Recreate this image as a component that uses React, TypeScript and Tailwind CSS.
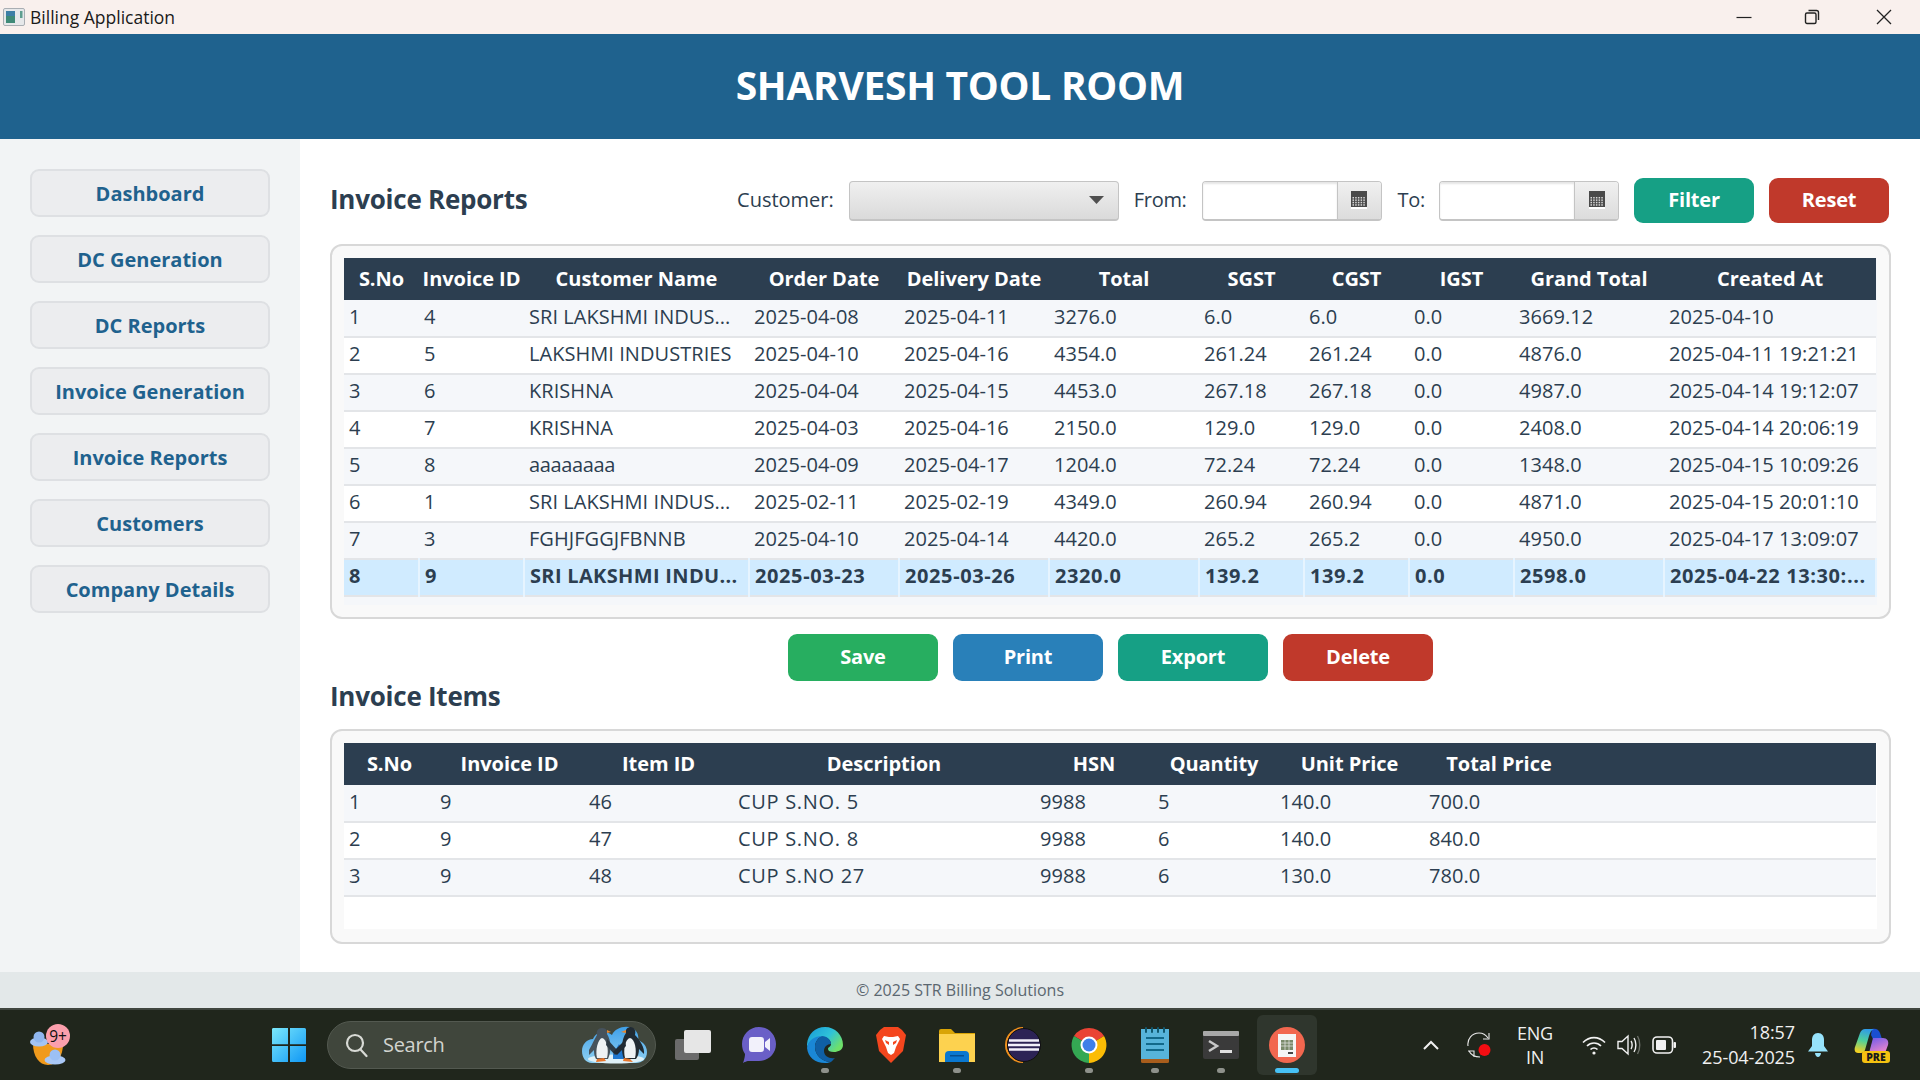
import React from "react";

const reportCols = ["w-[75px]", "w-[105px]", "w-[225px]", "w-[150px]", "w-[150px]", "w-[150px]", "w-[105px]", "w-[105px]", "w-[105px]", "w-[150px]", "w-[212px]"];
const reportHead = ["S.No", "Invoice ID", "Customer Name", "Order Date", "Delivery Date", "Total", "SGST", "CGST", "IGST", "Grand Total", "Created At"];
const reportRows = [
  ["1", "4", "SRI LAKSHMI INDUS...", "2025-04-08", "2025-04-11", "3276.0", "6.0", "6.0", "0.0", "3669.12", "2025-04-10"],
  ["2", "5", "LAKSHMI INDUSTRIES", "2025-04-10", "2025-04-16", "4354.0", "261.24", "261.24", "0.0", "4876.0", "2025-04-11 19:21:21"],
  ["3", "6", "KRISHNA", "2025-04-04", "2025-04-15", "4453.0", "267.18", "267.18", "0.0", "4987.0", "2025-04-14 19:12:07"],
  ["4", "7", "KRISHNA", "2025-04-03", "2025-04-16", "2150.0", "129.0", "129.0", "0.0", "2408.0", "2025-04-14 20:06:19"],
  ["5", "8", "aaaaaaaa", "2025-04-09", "2025-04-17", "1204.0", "72.24", "72.24", "0.0", "1348.0", "2025-04-15 10:09:26"],
  ["6", "1", "SRI LAKSHMI INDUS...", "2025-02-11", "2025-02-19", "4349.0", "260.94", "260.94", "0.0", "4871.0", "2025-04-15 20:01:10"],
  ["7", "3", "FGHJFGGJFBNNB", "2025-04-10", "2025-04-14", "4420.0", "265.2", "265.2", "0.0", "4950.0", "2025-04-17 13:09:07"],
  ["8", "9", "SRI LAKSHMI INDU...", "2025-03-23", "2025-03-26", "2320.0", "139.2", "139.2", "0.0", "2598.0", "2025-04-22 13:30:..."],
];
const itemCols = ["w-[91px]", "w-[149px]", "w-[149px]", "w-[302px]", "w-[118px]", "w-[122px]", "w-[149px]", "w-[150px]", "w-[302px]"];
const itemHead = ["S.No", "Invoice ID", "Item ID", "Description", "HSN", "Quantity", "Unit Price", "Total Price", ""];
const itemRows = [
  ["1", "9", "46", "CUP S.NO. 5", "9988", "5", "140.0", "700.0", ""],
  ["2", "9", "47", "CUP S.NO. 8", "9988", "6", "140.0", "840.0", ""],
  ["3", "9", "48", "CUP S.NO 27", "9988", "6", "130.0", "780.0", ""],
];
const nav = ["Dashboard", "DC Generation", "DC Reports", "Invoice Generation", "Invoice Reports", "Customers", "Company Details"];

function trackingFor(cell: string, sel: boolean, col: number) {
  if (sel) return col === 2 ? "tracking-[0.33px] border-r-2 border-[#e6f4ff]" : "tracking-[0.6px] border-r-2 border-[#e6f4ff]";
  if (cell.startsWith("CUP")) return "tracking-[0.7px]";
  if (cell === "aaaaaaaa") return "tracking-[-0.35px]";
  return "tracking-[0.05px]";
}

function DataTable({ cols, head, rows, selected }: { cols: string[]; head: string[]; rows: string[][]; selected?: number }) {
  return (
    <table className="table-fixed w-[1532px] border-collapse">
      <colgroup>
        {cols.map((c, i) => (
          <col key={i} className={c} />
        ))}
      </colgroup>
      <thead>
        <tr className="h-[42px] bg-[#2c3e50] text-white">
          {head.map((h, i) => (
            <th key={i} className="p-0 text-center text-[20px] font-bold tracking-[-0.05px] whitespace-nowrap">{h}</th>
          ))}
        </tr>
      </thead>
      <tbody>
        {rows.map((r, i) => {
          const sel = i === selected;
          return (
            <tr key={i} className={`h-[37px] border-b-2 border-[#e3e5e8] ${sel ? "bg-[#d0ebff] font-bold" : i % 2 === 0 ? "bg-[#f5f7fa]" : "bg-white"}`}>
              {r.map((c, j) => (
                <td key={j} className={`p-0 pl-[5px] pb-[3px] text-[20px] leading-[24px] text-[#2c3e50] whitespace-nowrap overflow-hidden ${trackingFor(c, sel, j)}`}>{c}</td>
              ))}
            </tr>
          );
        })}
      </tbody>
    </table>
  );
}

function ActionButton({ label, color }: { label: string; color: string }) {
  return (
    <button className={`w-[150px] ${color} h-[47px] pb-[2px] rounded-[9px] text-white text-[20px] font-bold tracking-[-0.2px]`}>{label}</button>
  );
}

function DateField() {
  return (
    <div className="flex w-[180px] h-[40px] rounded-[4px] border border-[#c4c4c4] border-b-2 bg-white overflow-hidden">
      <div className="flex-1 shadow-[inset_0_2px_2px_#e5e5e5]" />
      <div className="w-[44px] border-l border-[#c4c4c4] bg-gradient-to-b from-[#f0f0f0] to-[#dcdcdc] flex items-center justify-center">
        <svg width="16" height="18" viewBox="0 0 16 18">
          <rect x="0" y="0" width="16" height="18" fill="#4a4a4a" />
          <rect x="0" y="16" width="16" height="2" fill="#fff" />
          {[0, 1, 2, 3].map((y) =>
            [0, 1, 2, 3, 4].map((x) => <rect key={`${x}-${y}`} x={1.5 + x * 2.7} y={6 + y * 2.4} width="1.5" height="1.5" fill="#d8d8d8" />)
          )}
        </svg>
      </div>
    </div>
  );
}

function Tile({ children, dot, active }: { children: React.ReactNode; dot?: boolean; active?: boolean }) {
  return (
    <div className="relative w-[66px] h-[60px] flex items-center justify-center">
      {active && <span className="absolute inset-y-0 left-[3px] right-[3px] rounded-[6px] bg-[#2f362d]" />}
      <span className="relative flex">{children}</span>
      {dot && <span className="absolute bottom-[2px] left-[29px] w-[8px] h-[5px] rounded-full bg-[#8e918b]" />}
      {active && <span className="absolute bottom-[2px] left-[21px] w-[24px] h-[5px] rounded-full bg-[#47c1f5]" />}
    </div>
  );
}

function Penguins() {
  return (
    <svg width="65" height="38" viewBox="0 0 65 38">
      <defs>
        <linearGradient id="sky" x1="0" y1="0" x2="0" y2="1">
          <stop offset="0" stopColor="#3f9fe8" />
          <stop offset="1" stopColor="#8fd0f2" />
        </linearGradient>
      </defs>
      <path d="M0 25C0 18 5 13 11 13C14 5 24 4 30 9C33 2 43-1 50 2C56 5 57 11 56 14C61 16 65 20 65 26C65 33 60 37 54 37H10C4 37 0 32 0 25Z" fill="url(#sky)" />
      <ellipse cx="34" cy="33" rx="28" ry="4.500" fill="#dff1f8" />
      <path d="M31 28L37 18L43 28V33H31Z" fill="#1f78d0" />
      <path d="M7 24C11 17 13 12 15 9C14 5 16 2 20 2C24 2 26 5 25 8C29 14 30 24 26 33H14C12 30 12 26 12 24L7 29Z" fill="#46525c" />
      <path d="M15 32C13 24 16 13 20 12C25 13 27 24 25 32Z" fill="#edf1f4" />
      <path d="M25 4L29 6L25 7Z" fill="#e8872c" />
      <path d="M25 13L37 26L33 29L24 19Z" fill="#2c3a45" />
      <path d="M44 7C43 3 46 1 49 1C53 2 54 5 53 9C58 14 63 22 62 28L57 23C57 27 56 30 54 33H42C39 26 39 14 44 7Z" fill="#202a33" />
      <path d="M43 32C41 24 43 13 48 12C53 13 55 24 53 32Z" fill="#eef3f6" />
      <path d="M44 4L39 6L44 7Z" fill="#e8872c" />
      <path d="M43 14L31 26L35 29L44 20Z" fill="#202a33" />
      <path d="M15 33L22 32L24 35L14 36ZM42 32L48 33L51 36L41 35Z" fill="#e8762c" />
    </svg>
  );
}

export default function App() {
  return (
    <div className="w-[1920px] h-[1080px] overflow-hidden flex flex-col bg-white font-['Open_Sans',sans-serif]">
      {/* Title bar */}
      <div className="h-[34px] flex items-center bg-[#f9f0ed] shrink-0">
        <svg className="ml-[3px]" width="22" height="20" viewBox="0 0 22 20">
          <rect x="0.5" y="1.5" width="21" height="17" rx="1.5" fill="#e6e8ea" stroke="#a9aeb3" />
          <rect x="3" y="4" width="9" height="12" fill="#3f8a78" />
          <rect x="3" y="4" width="9" height="5" fill="#3d7fa6" />
          <rect x="17" y="4" width="2.5" height="7" fill="#5f9e8f" />
        </svg>
        <span className="ml-[5px] text-[17.5px] text-[#1a1a1a]">Billing Application</span>
        <div className="ml-auto flex items-center pr-[28px]">
          <svg width="16" height="16" viewBox="0 0 16 16" className="mr-[52px]"><path d="M0.5 8.5H15.5" stroke="#222" strokeWidth="1.2" /></svg>
          <svg width="16" height="16" viewBox="0 0 16 16" className="mr-[56px]"><rect x="1.5" y="4" width="10.5" height="10.5" rx="1.5" fill="none" stroke="#222" strokeWidth="1.4" /><path d="M4.5 1.5H12.5A2 2 0 0 1 14.5 3.5V11" fill="none" stroke="#222" strokeWidth="1.4" /></svg>
          <svg width="16" height="16" viewBox="0 0 16 16"><path d="M1 1L15 15M15 1L1 15" stroke="#222" strokeWidth="1.3" /></svg>
        </div>
      </div>

      {/* Header */}
      <div className="h-[105px] shrink-0 bg-[#1f628e] flex items-center justify-center">
        <h1 className="text-[39px] font-bold text-white tracking-[-0.3px] mb-[2px]">SHARVESH TOOL ROOM</h1>
      </div>

      <div className="flex-1 flex min-h-0">
        {/* Sidebar */}
        <aside className="w-[300px] bg-[#f2f4f5] pt-[30px] pl-[30px] flex flex-col gap-[18px] shrink-0">
          {nav.map((n) => (
            <button key={n} className="w-[240px] h-[48px] pt-[1px] rounded-[9px] border-2 border-[#dee0e3] bg-[#ecedef] text-[#1f628e] text-[20px] font-bold">
              {n}
            </button>
          ))}
        </aside>

        {/* Main */}
        <main className="flex-1 pt-[39px] pl-[30px] pr-[30px] flex flex-col">
          <div className="h-[45px] flex items-center">
            <h2 className="text-[26px] font-bold text-[#2c3e50] tracking-[-0.25px] mb-[2px]">Invoice Reports</h2>
            <div className="ml-auto flex items-center pr-[2px]">
              <span className="text-[20px] text-[#2c3e50] mr-[15px] mb-[2px]">Customer:</span>
              <div className="w-[270px] h-[40px] rounded-[4px] border border-[#c4c4c4] border-b-2 bg-gradient-to-b from-[#f0f0f0] to-[#dadada] flex items-center justify-end pr-[14px]">
                <svg width="15" height="8" viewBox="0 0 15 8"><path d="M0 0H15L7.5 8Z" fill="#505050" /></svg>
              </div>
              <span className="ml-[15px] mr-[15px] mb-[2px] text-[20px] text-[#2c3e50] tracking-[-0.3px]">From:</span>
              <DateField />
              <span className="ml-[16px] mr-[14px] mb-[2px] text-[20px] text-[#2c3e50] tracking-[-0.3px]">To:</span>
              <DateField />
              <div className="ml-[15px] flex gap-[15px]">
                <button className="w-[120px] h-[45px] pb-[2px] rounded-[9px] bg-[#16a085] text-white text-[20px] font-bold tracking-[-0.2px]">Filter</button>
                <button className="w-[120px] h-[45px] pb-[2px] rounded-[9px] bg-[#c0392b] text-white text-[20px] font-bold tracking-[-0.2px]">Reset</button>
              </div>
            </div>
          </div>

          <div className="mt-[21px] h-[375px] rounded-[12px] border-2 border-[#d8d8d8] bg-[#f9f9f9] pt-[12px] pl-[12px] pr-[12px]">
            <div className="h-[347px] bg-[#f5f7fa]">
              <DataTable cols={reportCols} head={reportHead} rows={reportRows} selected={7} />
            </div>
          </div>

          <div className="mt-[15px] flex justify-center gap-[15px]">
            <ActionButton label="Save" color="bg-[#27ae60]" />
            <ActionButton label="Print" color="bg-[#2980b9]" />
            <ActionButton label="Export" color="bg-[#16a085]" />
            <ActionButton label="Delete" color="bg-[#c0392b]" />
          </div>

          <h2 className="h-[32px] leading-[30px] text-[26px] font-bold text-[#2c3e50] tracking-[-0.25px]">Invoice Items</h2>

          <div className="mt-[16px] h-[215px] rounded-[12px] border-2 border-[#d8d8d8] bg-[#f9f9f9] pt-[12px] pl-[12px] pr-[12px]">
            <div className="h-[186px] bg-white">
              <DataTable cols={itemCols} head={itemHead} rows={itemRows} />
            </div>
          </div>
        </main>
      </div>

      {/* Footer */}
      <div className="h-[36px] shrink-0 bg-[#e3e8e9] flex items-center justify-center text-[16px] text-[#5b6770]">
        © 2025 STR Billing Solutions
      </div>

      {/* Taskbar */}
      <div className="h-[72px] shrink-0 bg-[#20261c] border-t-2 border-[#40463f] flex items-center">
        {/* Weather */}
        <div className="ml-[30px] w-[40px] h-[42px] shrink-0">
          <svg width="42" height="42" viewBox="0 0 42 42">
            <path d="M3 20H33C33 32 27 41 18 41C9 41 3 32 3 20Z" fill="#f09a1c" />
            <ellipse cx="9" cy="18" rx="9" ry="4.500" fill="#a4c4f4" />
            <circle cx="9" cy="13" r="5.500" fill="#8fb6ee" />
            <ellipse cx="25" cy="36" rx="10.500" ry="4.500" fill="#a9c8f6" />
            <circle cx="25" cy="31" r="5.500" fill="#9cc0f4" />
            <circle cx="28" cy="12" r="12" fill="#fb9fac" />
            <text x="28" y="17.500" textAnchor="middle" fontSize="15.500" fill="#111" fontFamily="Open Sans">9+</text>
          </svg>
        </div>
        {/* Start */}
        <div className="ml-[186px] w-[66px] flex justify-center shrink-0">
          <svg width="36" height="36" viewBox="0 0 36 36">
            <defs>
              <linearGradient id="win" x1="0" y1="0" x2="1" y2="1">
                <stop offset="0" stopColor="#7be8fb" />
                <stop offset="1" stopColor="#0f97f5" />
              </linearGradient>
            </defs>
            <path d="M1 2A1.5 1.5 0 0 1 2.5 1H17V17.2H1ZM19 1H33.5A1.5 1.5 0 0 1 35 2.5V17.2H19ZM1 19H17V35H2.500A1.500 1.500 0 0 1 1 33.500ZM19 19H35V33.500A1.500 1.500 0 0 1 33.500 35H19Z" fill="url(#win)" />
          </svg>
        </div>
        {/* Search */}
        <div className="ml-[5px] w-[329px] h-[48px] rounded-full bg-[#40463c] border border-[#535950] flex items-center shrink-0">
          <svg className="ml-[17px]" width="23" height="26" viewBox="0 0 23 26" fill="none" stroke="#d8dad5" strokeWidth="2.2">
            <circle cx="10" cy="11" r="8" />
            <path d="M16 18L21.500 24" strokeLinecap="round" />
          </svg>
          <span className="ml-[15px] text-[20px] text-[#d2d4cf] tracking-[-0.3px]">Search</span>
          <div className="ml-auto mr-[8px] flex"><Penguins /></div>
        </div>
        {/* Apps */}
        <div className="ml-[4px] flex shrink-0">
          <Tile>
            <svg width="36" height="30" viewBox="0 0 36 30">
              <rect x="0" y="9" width="24" height="21" rx="2" fill="#6b6b6b" />
              <rect x="9" y="0" width="27" height="23" rx="2" fill="#e6e6e6" />
            </svg>
          </Tile>
          <Tile>
            <svg width="34" height="36" viewBox="0 0 34 36">
              <path d="M17 0C27 0 34 8 34 17C34 27 26 34 17 34H7C4 34 1 36 1 36C1 36 3 31 3 27C1 24 0 21 0 17C0 8 7 0 17 0Z" fill="#6a5fc7" />
              <rect x="7" y="10" width="15" height="15" rx="3" fill="#f2f1fb" />
              <path d="M23 15L28 11V24L23 20Z" fill="#f2f1fb" />
            </svg>
          </Tile>
          <Tile dot>
            <svg width="36" height="36" viewBox="0 0 36 36">
              <defs>
                <linearGradient id="edge" x1="0" y1="0" x2="1" y2="0.6">
                  <stop offset="0" stopColor="#1798d8" />
                  <stop offset="0.6" stopColor="#2fc3d8" />
                  <stop offset="1" stopColor="#6ee06a" />
                </linearGradient>
              </defs>
              <path d="M18 0C28 0 36 8 36 18C36 23 31 25 27 25C23 25 21 24 21 22C21 20 24 20 24 17C24 13 20 10 16 10C8 10 1 15 0 21C-1 9 7 0 18 0Z" fill="url(#edge)" />
              <path d="M0 21C1 13 8 9 15 9C11 11 8 15 8 20C8 28 15 35 24 35C21 36 19 36 18 36C8 36 1 30 0 21Z" fill="#1a87d6" />
              <path d="M15 9C20 9 24 13 24 17C20 17 17 20 17 24C17 29 22 32 28 31C26 33 25 34 24 35C15 35 8 28 8 20C8 15 11 11 15 9Z" fill="#0f5fa5" />
            </svg>
          </Tile>
          <Tile>
            <svg width="30" height="36" viewBox="0 0 30 36">
              <path d="M8 0H22L26 3L30 8L27 24L15 36L3 24L0 8L4 3Z" fill="#f4461e" />
              <path d="M8 9L13 10H17L22 9L24 12L20 20L18 26L15 28L12 26L10 20L6 12Z" fill="#fff" />
              <path d="M9 13L13 15V18L10 16ZM21 13L17 15V18L20 16Z" fill="#f4461e" />
            </svg>
          </Tile>
          <Tile dot>
            <svg width="36" height="33" viewBox="0 0 36 33">
              <path d="M0 2A2 2 0 0 1 2 0H12L16 4H36V8H0Z" fill="#d9a406" />
              <path d="M0 5H36V33H0Z" fill="#fdd24f" />
              <path d="M6 33V26A4 4 0 0 1 10 22H26A4 4 0 0 1 30 26V33Z" fill="#0a78d0" />
              <rect x="11" y="26" width="14" height="1.500" fill="#054f8f" />
            </svg>
          </Tile>
          <Tile>
            <svg width="36" height="36" viewBox="0 0 36 36">
              <path d="M18 1A17 17 0 0 0 18 35" fill="none" stroke="#f0901e" strokeWidth="2" />
              <circle cx="19" cy="18" r="16.500" fill="#2c2255" stroke="#111" strokeWidth="1" />
              <path d="M4 13.500H34M3 18H35M4 22.500H34" stroke="#f2f0fa" strokeWidth="2.400" />
            </svg>
          </Tile>
          <Tile dot>
            <svg width="36" height="36" viewBox="0 0 36 36">
              <path d="M18 18L3 9A18 18 0 0 1 33 9Z" fill="#ea4335" />
              <path d="M18 18L33 9A18 18 0 0 1 18 36L18 36Z" fill="#fbbc05" />
              <path d="M18 18L18 36A18 18 0 0 1 3 9Z" fill="#34a853" />
              <circle cx="18" cy="18" r="8.500" fill="#fff" />
              <circle cx="18" cy="18" r="6.500" fill="#3f7fe8" />
            </svg>
          </Tile>
          <Tile dot>
            <svg width="30" height="36" viewBox="0 0 30 36">
              <rect x="1" y="2" width="28" height="34" rx="1.500" fill="#a85d1c" />
              <rect x="1" y="2" width="28" height="30" fill="#57b4da" />
              <path d="M6 1V5M12 1V5M18 1V5M24 1V5" stroke="#10586f" strokeWidth="2" strokeLinecap="round" />
              <path d="M6 11H24M6 17H24M6 23H24" stroke="#12698a" strokeWidth="2" />
            </svg>
          </Tile>
          <Tile dot>
            <svg width="36" height="28" viewBox="0 0 36 28">
              <rect width="36" height="28" rx="2" fill="#3a3a3a" />
              <rect width="36" height="5" rx="1" fill="#a8a8a8" />
              <path d="M6 10L14 15L6 20" fill="none" stroke="#c8c8c8" strokeWidth="2.500" />
              <rect x="17" y="19" width="12" height="3" fill="#e0e0e0" />
            </svg>
          </Tile>
          <Tile active>
            <svg width="36" height="36" viewBox="0 0 36 36">
              <ellipse cx="18" cy="18" rx="18" ry="18" fill="#f2674f" />
              <rect x="9" y="7" width="18" height="23" fill="#f5f5f5" />
              <rect x="12" y="13" width="12" height="10" fill="#7a8a6a" />
              <path d="M12 16H24M12 19H24M16 13V23M20 13V23" stroke="#e8e8e8" strokeWidth="0.700" />
              <rect x="19" y="25" width="5" height="2" fill="#444" />
            </svg>
          </Tile>
        </div>
        {/* Tray */}
        <svg className="ml-[103px] shrink-0" width="16" height="10" viewBox="0 0 16 10" fill="none" stroke="#f0f0f0" strokeWidth="2"><path d="M1 9L8 2L15 9" /></svg>
        <svg className="ml-[28px] shrink-0" width="24" height="26" viewBox="0 0 24 26" fill="none" stroke="#e8e8e8" strokeWidth="1.100">
          <path d="M1 14C0 7 5 1 12 1C16 1 19 3 21 6" />
          <path d="M22 1V7H16" />
          <path d="M1 19H7V25M2 19C4 23 8 25 13 25" />
          <circle cx="17.500" cy="18" r="6" fill="#f40d12" stroke="none" />
        </svg>
        <div className="ml-[22px] w-[44px] text-center text-[18px] leading-[24px] text-[#f0f0f0] tracking-[-0.2px] shrink-0">
          <div>ENG</div>
          <div>IN</div>
        </div>
        <svg className="ml-[25px] shrink-0" width="24" height="19" viewBox="0 0 24 19" fill="none" stroke="#f2f2f2" strokeWidth="1.700">
          <path d="M1 6.500C7.500 0 16.500 0 23 6.500" />
          <path d="M5 10C9 6 15 6 19 10" />
          <path d="M8.500 13.500C10.500 11.500 13.500 11.500 15.500 13.500" />
          <circle cx="12" cy="17" r="1.600" fill="#f2f2f2" stroke="none" />
        </svg>
        <svg className="ml-[11px] shrink-0" width="24" height="22" viewBox="0 0 24 22" fill="none" stroke="#f2f2f2" strokeWidth="1.400">
          <path d="M1 7.500H5L11 2V20L5 14.500H1Z" />
          <path d="M14 7C15.500 9 15.500 13 14 15" />
          <path d="M17 4C19.500 8 19.500 14 17 18" />
          <path d="M20.500 2C23.500 7 23.500 15 20.500 20" stroke="#6b6f68" />
        </svg>
        <svg className="ml-[11px] shrink-0" width="24" height="18" viewBox="0 0 24 18" fill="none">
          <rect x="1" y="1" width="19.500" height="16" rx="4" stroke="#f2f2f2" strokeWidth="1.600" />
          <rect x="4" y="4" width="10" height="10" rx="1" fill="#f2f2f2" />
          <rect x="21.500" y="6" width="2.500" height="6" rx="1" fill="#f2f2f2" />
        </svg>
        <div className="ml-[17px] w-[102px] text-right text-[18px] leading-[25px] text-[#f0f0f0] tracking-[-0.1px] shrink-0">
          <div>18:57</div>
          <div>25-04-2025</div>
        </div>
        <svg className="ml-[13px] shrink-0" width="20" height="24" viewBox="0 0 20 24">
          <path d="M10 0C14 0 16 3 16 7V13L20 18.500H0L4 13V7C4 3 6 0 10 0Z" fill="#97e3fb" />
          <path d="M7 20H13C13 22 11.500 24 10 24C8.500 24 7 22 7 20Z" fill="#97e3fb" />
        </svg>
        <svg className="ml-[26px] shrink-0" width="36" height="35" viewBox="0 0 36 35">
          <defs>
            <linearGradient id="cop2" x1="0.6" y1="0" x2="0.4" y2="1">
              <stop offset="0" stopColor="#2f9ae8" />
              <stop offset="0.5" stopColor="#4fd09a" />
              <stop offset="1" stopColor="#f5d020" />
            </linearGradient>
            <linearGradient id="cop" x1="0.3" y1="0" x2="0.8" y2="1">
              <stop offset="0" stopColor="#7a5fe8" />
              <stop offset="1" stopColor="#f58ac8" />
            </linearGradient>
          </defs>
          <path d="M18 1C21 0 25 1 26 5L28 11H19L17 7Z" fill="#1a4fd0" />
          <path d="M11 1H20C17 2 16 5 15 8L11 22C10.500 24 9 25 7 25H4C1 25 0 22 1 19L6 5C7 2.500 9 1 11 1Z" fill="url(#cop2)" />
          <path d="M19 10H29C33 10 35 13 34 17L31 25H15Z" fill="url(#cop)" />
          <rect x="8" y="23" width="28" height="12" rx="3" fill="#f5c211" />
          <text x="22" y="33" textAnchor="middle" fontSize="10.500" fontWeight="800" fill="#1a1a1a" fontFamily="Open Sans">PRE</text>
        </svg>
      </div>
    </div>
  );
}
